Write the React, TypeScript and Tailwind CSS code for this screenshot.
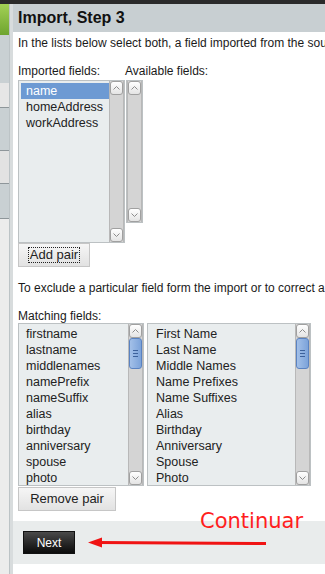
import React from "react";

const imported = ["name", "homeAddress", "workAddress"];
const matchLeft = ["firstname", "lastname", "middlenames", "namePrefix", "nameSuffix", "alias", "birthday", "anniversary", "spouse", "photo"];
const matchRight = ["First Name", "Last Name", "Middle Names", "Name Prefixes", "Name Suffixes", "Alias", "Birthday", "Anniversary", "Spouse", "Photo"];

function Chevron({ dir }: { dir: "up" | "down" }) {
  return (
    <svg width="7" height="4" viewBox="0 0 7 4" className="block">
      <polyline
        points={dir === "up" ? "0.5,3.5 3.5,0.5 6.5,3.5" : "0.5,0.5 3.5,3.5 6.5,0.5"}
        fill="none"
        stroke="#8c8c8c"
        strokeWidth="1"
      />
    </svg>
  );
}

function ScrollButton({ dir }: { dir: "up" | "down" }) {
  return (
    <div className="h-[14px] shrink-0 flex items-center justify-center rounded-[3px] border border-[#a0a0a0] bg-gradient-to-b from-white to-[#e4e4e4]">
      <Chevron dir={dir} />
    </div>
  );
}

function Scrollbar({ thumb }: { thumb?: boolean }) {
  return (
    <div className="w-[15px] shrink-0 h-full flex flex-col bg-[#d4d4d4] border-x border-[#b8b8b8]">
      <ScrollButton dir="up" />
      {thumb && (
        <div className="h-[31px] shrink-0 rounded-[3px] border border-[#5a83c2] bg-gradient-to-r from-[#a3c0e8] to-[#7ca3da] flex flex-col items-center justify-center gap-[2px]">
          <div className="w-[5px] h-px bg-[#3d619b]" />
          <div className="w-[5px] h-px bg-[#3d619b]" />
          <div className="w-[5px] h-px bg-[#3d619b]" />
        </div>
      )}
      <div className="flex-1" />
      <ScrollButton dir="down" />
    </div>
  );
}

function ListBox({ items, selected, width, thumb, pad }: { items: string[]; selected?: number; width: string; thumb?: boolean; pad: string }) {
  return (
    <div className={`${width} h-[163px] flex border border-[#bcc1c3] bg-[#e9edee]`}>
      <div className="flex-1 min-w-0 overflow-hidden p-[2px] pr-0 text-[12.5px] text-[#222]">
        {items.map((it, i) => (
          <div
            key={it}
            className={`h-[16px] leading-[16px] ${pad} ${i === selected ? "bg-[#6d9ad3] text-white" : ""}`}
          >
            {it}
          </div>
        ))}
      </div>
      <Scrollbar thumb={thumb} />
    </div>
  );
}

export default function App() {
  return (
    <div className="relative w-[325px] h-[574px] overflow-hidden bg-white flex flex-col font-['Liberation_Sans',Arial,sans-serif]">
      <div className="h-[4px] bg-[#2b2b2b] shrink-0" />
      <div className="flex flex-1 min-h-0">
        {/* side navigation, mostly cut off */}
        <div className="w-[9px] shrink-0 flex flex-col">
          <div className="h-[31px] bg-gradient-to-b from-[#a3d155] to-[#6ea42f]" />
          <div className="h-[48px] bg-[#c9d0d3]" />
          <div className="h-[24px] bg-[#e6e6e6]" />
          <div className="h-px bg-[#8e969a]" />
          <div className="h-[42px] bg-[#c9d0d3]" />
          <div className="h-px bg-[#8e969a]" />
          <div className="h-[32px] bg-[#e2e2e2]" />
          <div className="h-px bg-[#8e969a]" />
          <div className="h-[34px] bg-[#c9d0d3]" />
          <div className="h-px bg-[#8e969a]" />
          <div className="flex-1 bg-[#ececec]" />
        </div>
        <div className="w-[4px] shrink-0 bg-[#d8dcdd] border-l border-[#bcc3c6]" />

        <div className="flex-1 min-w-0 flex flex-col">
          <div className="h-[28px] shrink-0 bg-[#c8cfd2] pl-[5px] flex items-center text-[16px] font-bold text-[#111]">
            Import, Step 3
          </div>

          <div className="pl-[5px] whitespace-nowrap text-[12px] leading-[14px] text-[#1a1a1a]">
            <p className="mt-[4px]">In the lists below select both, a field imported from the source file and a field available in the address book.</p>

            <div className="flex items-start mt-[14px]">
              <div className="w-[107px] shrink-0">
                <div>Imported fields:</div>
                <div className="mt-[2px]">
                  <ListBox items={imported} selected={0} width="w-[107px]" pad="pl-[5px]" />
                </div>
              </div>
              <div>
                <div>Available fields:</div>
                <div className="mt-[2px] ml-[1px] w-[17px] h-[143px] flex border border-[#bcc1c3] bg-[#e9edee]">
                  <Scrollbar />
                </div>
              </div>
            </div>

            <button className="w-[72px] h-[24px] flex items-center justify-center border border-[#c6c6c6] bg-gradient-to-b from-[#f6f6f6] to-[#e2e2e2] text-[13px] text-[#222]">
              <span className="border border-dotted border-[#222] px-[1px] leading-[14px]">Add pair</span>
            </button>

            <p className="mt-[14px]">To exclude a particular field form the import or to correct a wrong matching, select the pair and remove it.</p>
            <p className="mt-[14px]">Matching fields:</p>

            <div className="flex gap-[3px]">
              <ListBox items={matchLeft} width="w-[126px]" thumb pad="pl-[5px]" />
              <ListBox items={matchRight} width="w-[164px]" thumb pad="pl-[6px]" />
            </div>

            <button className="mt-[1px] w-[98px] h-[24px] flex items-center justify-center border border-[#c6c6c6] bg-gradient-to-b from-[#f6f6f6] to-[#e2e2e2] text-[13px] text-[#222]">
              Remove pair
            </button>
          </div>

          <div className="mt-[10px] h-[43px] shrink-0 bg-[#e9ecec] pl-[10px] pt-[10px]">
            <button className="w-[52px] h-[23px] flex items-center justify-center border border-[#111] bg-gradient-to-b from-[#4a4a4a] to-[#0c0c0c] text-[12px] text-white">
              Next
            </button>
          </div>
        </div>
      </div>

      {/* red annotation drawn over the screenshot */}
      <div className="absolute left-[200px] top-[511px] text-[21px] leading-[21px] text-[#ff1e1e] font-['DejaVu_Sans',sans-serif]">
        Continuar
      </div>
      <svg className="absolute left-[86px] top-[535px]" width="184" height="16" viewBox="0 0 184 16">
        <line x1="12" y1="7.5" x2="180" y2="8.5" stroke="#f01414" strokeWidth="3" />
        <polygon points="2,7.5 16,2.5 16,12.5" fill="#f01414" />
      </svg>
    </div>
  );
}
